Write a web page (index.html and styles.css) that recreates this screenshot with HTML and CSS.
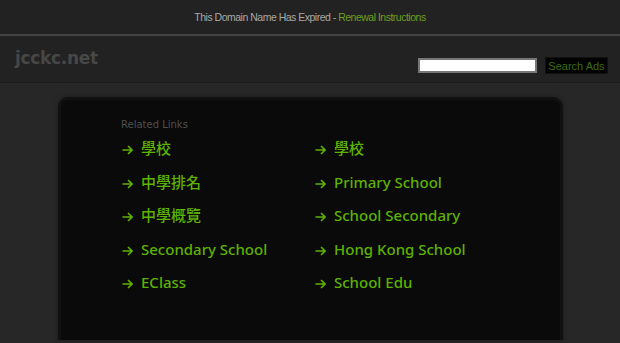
FILE: index.html
```html
<!DOCTYPE html>
<html>
  <head>
    <meta charset="UTF-8" />
    <title>jcckc.net</title>
    <link rel="stylesheet" href="styles.css">
  </head>

  <body>
    <div class="top-bar">
      This Domain Name Has Expired -
      <a class="renew" href="#">Renewal Instructions</a>
    </div>
    <header class="site-header">
      <h1 class="site-name">jcckc.net</h1>
      <form class="search">
        <input class="search-input" type="text" />
        <button class="search-btn" type="button">Search Ads</button>
      </form>
    </header>
    <div class="content">
      <div class="panel">
        <div class="links">
          <p class="links-title">Related Links</p>
          <ul class="link-list">
            <li><a href="#"><svg class="arrow" viewBox="0 0 11 10"><path d="M0.5 5H10M6 1L10 5L6 9"/></svg>學校</a></li>
            <li><a href="#"><svg class="arrow" viewBox="0 0 11 10"><path d="M0.5 5H10M6 1L10 5L6 9"/></svg>學校</a></li>
            <li><a href="#"><svg class="arrow" viewBox="0 0 11 10"><path d="M0.5 5H10M6 1L10 5L6 9"/></svg>中學排名</a></li>
            <li><a href="#"><svg class="arrow" viewBox="0 0 11 10"><path d="M0.5 5H10M6 1L10 5L6 9"/></svg>Primary School</a></li>
            <li><a href="#"><svg class="arrow" viewBox="0 0 11 10"><path d="M0.5 5H10M6 1L10 5L6 9"/></svg>中學概覽</a></li>
            <li><a href="#"><svg class="arrow" viewBox="0 0 11 10"><path d="M0.5 5H10M6 1L10 5L6 9"/></svg>School Secondary</a></li>
            <li><a href="#"><svg class="arrow" viewBox="0 0 11 10"><path d="M0.5 5H10M6 1L10 5L6 9"/></svg>Secondary School</a></li>
            <li><a href="#"><svg class="arrow" viewBox="0 0 11 10"><path d="M0.5 5H10M6 1L10 5L6 9"/></svg>Hong Kong School</a></li>
            <li><a href="#"><svg class="arrow" viewBox="0 0 11 10"><path d="M0.5 5H10M6 1L10 5L6 9"/></svg>EClass</a></li>
            <li><a href="#"><svg class="arrow" viewBox="0 0 11 10"><path d="M0.5 5H10M6 1L10 5L6 9"/></svg>School Edu</a></li>
          </ul>
        </div>
      </div>
    </div>
  </body>
</html>
```

FILE: styles.css
```css
html,
body {
  margin: 0;
  padding: 0;
  height: 100%;
}

body {
  background: #272727;
  font-family: "Liberation Sans", Arial, sans-serif;
  overflow: hidden;
}

.top-bar {
  height: 34px;
  line-height: 34px;
  background: #222222;
  border-bottom: 2px solid #444444;
  text-align: center;
  font-size: 10.5px;
  color: #a8a8a8;
  letter-spacing: -0.5px;
}

.renew {
  color: #6f9f1f;
  text-decoration: none;
}

.site-header {
  height: 46px;
  background: #222222;
  border-bottom: 1px solid #1c1c1c;
  display: flex;
  align-items: center;
  justify-content: space-between;
  padding: 0 12px 0 15px;
}

.site-name {
  margin: 0 0 2px;
  font-size: 17px;
  font-weight: bold;
  color: #474747;
  font-family: "DejaVu Sans", sans-serif;
  letter-spacing: -0.3px;
}

.search {
  display: flex;
  align-items: center;
  gap: 8px;
  margin-top: 13px;
}

.search-input {
  width: 115px;
  height: 11px;
  margin: 0;
  padding: 0;
  border: 2px solid #777777;
  background: #ffffff;
}

.search-btn {
  height: 17px;
  width: 63px;
  padding: 0;
  margin: 0;
  border: 1px solid #111111;
  background: #030303;
  color: #3d6a10;
  font-size: 11px;
  font-family: "Liberation Sans", Arial, sans-serif;
}

.content {
  padding: 14px 57px 0 58px;
}

.panel {
  height: 240px;
  background: #0a0a0a;
  border: 3px solid #111111;
  border-bottom: 0;
  border-radius: 10px 10px 0 0;
  box-shadow: 0 0 4px #1a1a1a;
}

.links {
  padding: 19px 0 0 60px;
}

.links-title {
  margin: 0 0 5px;
  font-family: "DejaVu Sans", sans-serif;
  font-size: 10px;
  color: #4f4f4f;
}

.link-list {
  list-style: none;
  margin: 0;
  padding: 0;
  display: grid;
  grid-template-columns: 193px 200px;
  grid-auto-rows: 33.5px;
}

.link-list li {
  line-height: 26px;
}

.link-list a {
  font-family: "Noto Sans", "Noto Sans CJK TC", sans-serif;
  font-size: 15px;
  font-weight: 500;
  color: #5eb200;
  text-decoration: none;
}

.arrow {
  width: 11px;
  height: 10px;
  margin: 0 8px 0 1px;
  vertical-align: -1px;
  fill: none;
  stroke: #5eb200;
  stroke-width: 1.6;
}
```
